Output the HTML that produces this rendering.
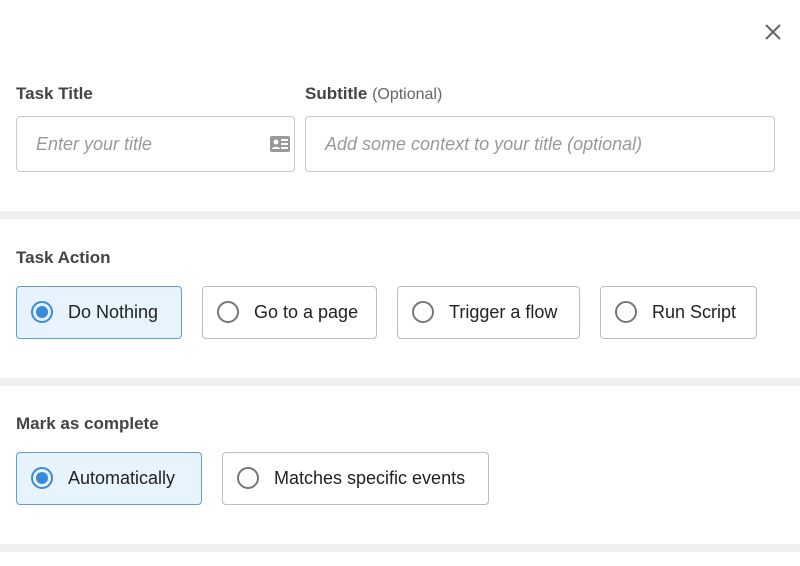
<!DOCTYPE html>
<html><head><style>
body{margin:0;width:800px;height:566px;background:#fff;font-family:"Liberation Sans",sans-serif;position:relative;overflow:hidden;color:#333}
.a{position:absolute}
.lbl{font-size:17px;font-weight:bold;color:#444}
.inp{border:1px solid #ccc;border-radius:4px;box-sizing:border-box;font-style:italic;color:#999;font-size:18px;line-height:54px;padding-left:19px}
.band{left:0;width:800px;height:8px;background:#efefef}
.btn{border:1px solid #bdbdbd;border-radius:4px;box-sizing:border-box;height:53px;font-size:18px;color:#222;line-height:51px;padding-left:51px}
.btn:before{content:"";position:absolute;left:14px;top:14px;width:22px;height:22px;border:2px solid #777;border-radius:50%;box-sizing:border-box}
.sel{background:#e7f3fd;border-color:#5d9fd6}
.sel:before{border-color:#3b8ad8}
.sel:after{content:"";position:absolute;left:19px;top:19px;width:12px;height:12px;border-radius:50%;background:#3b8ad8}
</style></head><body>
<svg class="a" style="left:764px;top:23px" width="18" height="18" viewBox="0 0 18 18"><path d="M2 2L16 16M16 2L2 16" stroke="#666" stroke-width="2"/></svg>
<div class="a lbl" style="left:16px;top:84px">Task Title</div>
<div class="a lbl" style="left:305px;top:84px">Subtitle <span style="font-weight:normal;color:#666;font-size:16px">(Optional)</span></div>
<div class="a inp" style="left:16px;top:116px;width:279px;height:56px">Enter your title</div>
<svg class="a" style="left:270px;top:136px" width="20" height="16" viewBox="0 0 20 16"><rect x="0" y="0" width="20" height="16" rx="2" fill="#999"/><circle cx="6" cy="6" r="2.5" fill="#fff"/><path d="M2 13c0-3 8-3 8 0z" fill="#fff"/><rect x="11" y="3" width="7" height="2" fill="#fff"/><rect x="11" y="7" width="7" height="2" fill="#fff"/><rect x="11" y="11" width="7" height="2" fill="#fff"/></svg>
<div class="a inp" style="left:305px;top:116px;width:470px;height:56px">Add some context to your title (optional)</div>
<div class="a band" style="top:211px"></div>
<div class="a lbl" style="left:16px;top:248px">Task Action</div>
<div class="a btn sel" style="left:16px;top:286px;width:166px">Do Nothing</div>
<div class="a btn" style="left:202px;top:286px;width:175px">Go to a page</div>
<div class="a btn" style="left:397px;top:286px;width:183px">Trigger a flow</div>
<div class="a btn" style="left:600px;top:286px;width:157px">Run Script</div>
<div class="a band" style="top:378px"></div>
<div class="a lbl" style="left:16px;top:414px">Mark as complete</div>
<div class="a btn sel" style="left:16px;top:452px;width:186px">Automatically</div>
<div class="a btn" style="left:222px;top:452px;width:267px">Matches specific events</div>
<div class="a band" style="top:544px"></div>
</body></html>
